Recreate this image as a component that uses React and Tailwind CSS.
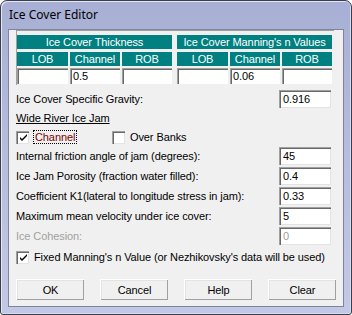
import React from "react";

const Check = () => (
  <svg width="9" height="9" viewBox="0 0 9 9" className="block">
    <path d="M1 4 L3 6 L8 1 L8 3 L3 8 L1 6 Z" fill="#000" />
  </svg>
);

const Checkbox = ({ checked }) => (
  <div className="w-[13px] h-[13px] bg-white border-t border-l border-[#a0a0a0] border-r-white border-b-white shadow-[inset_1px_1px_0_#696969,inset_-1px_-1px_0_#e3e3e3] flex items-center justify-center shrink-0">
    {checked && <Check />}
  </div>
);

const Field = ({ value, disabled }) => (
  <div
    className={`w-[52px] h-[18px] bg-white border-t border-l border-[#a0a0a0] border-r-white border-b-white shadow-[inset_1px_1px_0_#696969,inset_-1px_-1px_0_#e3e3e3] pl-[3px] leading-[16px] ${
      disabled ? "text-[#a0a0a0]" : "text-black"
    }`}
  >
    {value}
  </div>
);

const Row = ({ label, value, disabled }) => (
  <div className="flex items-center justify-between h-[18px] mb-[2px] pr-[12px]">
    <span className={disabled ? "text-[#a0a0a0]" : ""}>{label}</span>
    <Field value={value} disabled={disabled} />
  </div>
);

const Table = ({ title, channel }) => (
  <div className="grid grid-cols-[51px_50px_50px] gap-[2px] w-[155px]">
    <div className="col-span-3 h-[14px] bg-[#008080] text-white text-center leading-[14px]">
      {title}
    </div>
    {["LOB", "Channel", "ROB"].map((c) => (
      <div key={c} className="h-[14px] bg-[#008080] text-white text-center leading-[14px]">
        {c}
      </div>
    ))}
    {["", channel, ""].map((v, i) => (
      <div
        key={i}
        className="h-[16px] bg-white border-t border-l border-[#a0a0a0] border-r-white border-b-white shadow-[inset_1px_1px_0_#696969] pl-[2px] leading-[14px] text-black"
      >
        {v}
      </div>
    ))}
  </div>
);

const Button = ({ children }) => (
  <button className="w-[68px] h-[21px] bg-[#f0f0f0] border-t border-l border-white border-r-[#696969] border-b-[#696969] shadow-[inset_-1px_-1px_0_#a0a0a0,inset_1px_1px_0_#e3e3e3] text-black leading-[18px]">
    {children}
  </button>
);

export default function App() {
  return (
    <div className="w-[352px] h-[315px] bg-white">
      <div className="w-[352px] h-[315px] rounded-t-[7px] rounded-b-[3px] border border-[#3a3e4c] bg-gradient-to-b from-[#a7afd4] via-[#b6bddd] to-[#c3c9e4] flex flex-col px-[7px] pb-[7px] shadow-[inset_1px_1px_0_#e6e9f5,inset_-1px_-1px_0_#d7dbee]">
        <div className="h-[28px] flex items-center pl-[1px] text-[12px] text-black font-['Noto_Sans',sans-serif]">
          Ice Cover Editor
        </div>
        <div className="flex-1 bg-[#f0f0f0] border border-[#7c849f] font-['Liberation_Sans',sans-serif] text-[11px] tracking-[-0.1px] text-black pl-[7px]">
          <div className="mr-[9px] h-[55px] border-t border-l border-[#a0a0a0] border-r-white border-b-white pt-[4px] flex gap-[5px]">
            <Table title="Ice Cover Thickness" channel="0.5" />
            <Table title="Ice Cover Manning's n Values" channel="0.06" />
          </div>
          <div className="mt-[5px]">
            <Row label="Ice Cover Specific Gravity:" value="0.916" />
          </div>
          <div className="h-[15px] leading-[15px] mt-[3px] underline">Wide River Ice Jam</div>
          <div className="flex items-center h-[14px] mt-[4px]">
            <Checkbox checked />
            <div className="w-[83px] pl-[4px]">
              <span className="inline-block px-[1px] border border-dotted border-black text-[#800000] leading-[12px]">
                Channel
              </span>
            </div>
            <Checkbox />
            <span className="ml-[5px]">Over Banks</span>
          </div>
          <div className="mt-[3px]">
            <Row label="Internal friction angle of jam (degrees):" value="45" />
            <Row label="Ice Jam Porosity (fraction water filled):" value="0.4" />
            <Row label="Coefficient K1(lateral to longitude stress in jam):" value="0.33" />
            <Row label="Maximum mean velocity under ice cover:" value="5" />
            <Row label="Ice Cohesion:" value="0" disabled />
          </div>
          <div className="flex items-center h-[14px] mt-[5px]">
            <Checkbox checked />
            <span className="ml-[5px]">Fixed Manning's n Value (or Nezhikovsky's data will be used)</span>
          </div>
          <div className="flex gap-[16px] mt-[15px]">
            <Button>OK</Button>
            <Button>Cancel</Button>
            <Button>Help</Button>
            <Button>Clear</Button>
          </div>
        </div>
      </div>
    </div>
  );
}
